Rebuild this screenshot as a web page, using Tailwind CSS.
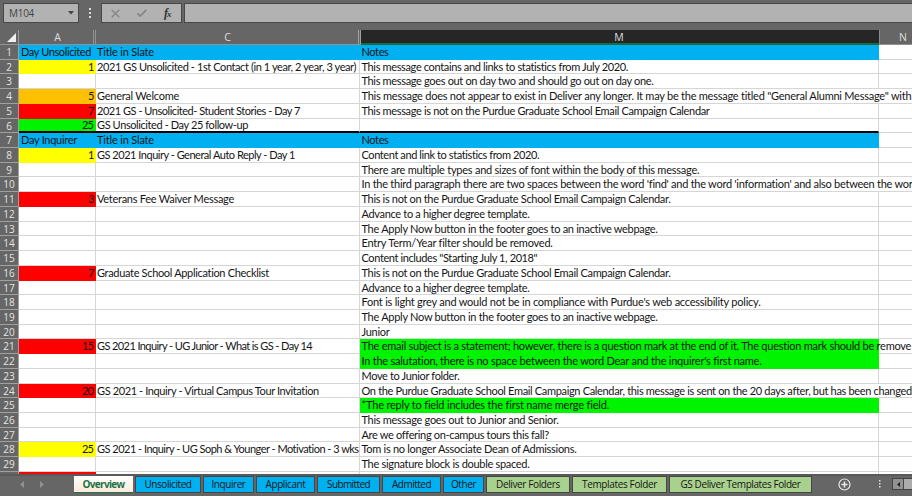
<!DOCTYPE html>
<html lang="en">
<head>
<meta charset="utf-8">
<title>Email campaign overview</title>
<script src="https://cdn.jsdelivr.net/npm/@tailwindcss/browser@4"></script>
</head>
<body class="w-[912px] h-[496px] overflow-hidden bg-[#666666] font-['Lato','Open_Sans',sans-serif] text-[11px] text-[#151515]">
<div class="flex flex-col h-[496px] w-[912px] overflow-hidden">
  <!-- formula bar -->
  <div class="h-[30px] shrink-0 flex items-start pt-[3px] pl-[3px]">
    <div class="w-[76px] h-5 border border-[#484848] bg-[#b2b2b2] flex items-center justify-between pl-[5px] pr-1 text-[#444] font-['Open_Sans',sans-serif] text-[10px]"><span data-w="25">M104</span>
      <svg width="6" height="4" viewBox="0 0 6 4"><path d="M0 0h6L3 3.6z" fill="#444"/></svg></div>
    <svg class="ml-[9px] mt-[5px]" width="4" height="10" viewBox="0 0 4 10" fill="#ddd"><path d="M1 0h2v2H1zM1 4h2v2H1zM1 8h2v2H1z"/></svg>
    <div class="ml-[9px] w-[81px] h-5 border border-[#484848] bg-[#b2b2b2] flex items-center">
      <svg class="ml-[9px]" width="9" height="9" viewBox="0 0 9 9" fill="none" stroke="#858585" stroke-width="1.3"><path d="M.7.7l7.6 7.600M8.300.7L.7 8.300"/></svg>
      <svg class="ml-[17px]" width="10" height="8" viewBox="0 0 10 8" fill="none" stroke="#858585" stroke-width="1.7"><path d="M.6 4.3L3.3 7 9.3.8"/></svg>
      <span class="ml-[17px] font-['Liberation_Serif',serif] italic font-bold text-[12px] leading-3 text-[#333]">f<span class="text-[9px] -ml-px">x</span></span>
    </div>
    <div class="ml-[2px] flex-1 h-5 border border-r-0 border-[#484848] bg-[#b2b2b2]"></div>
  </div>
  <!-- column headings -->
  <div class="h-[15px] shrink-0 flex text-[#dedede] font-['Open_Sans',sans-serif] text-[10.5px] leading-[14px] text-center border-b border-[#929292]">
    <div class="w-[19px] border-r border-[#9a9a9a] flex justify-end items-end pr-[2px] pb-[2px]"><svg width="9" height="9" viewBox="0 0 9 9"><path d="M9 0v9H0z" fill="#f0f0f0"/></svg></div>
    <div class="w-[77px] flex"><div class="flex-1 pl-[3px]">A</div><div class="w-[3px] border-x border-[#929292]"></div></div>
    <div class="w-[265px] flex"><div class="flex-1 pl-[1px]">C</div><div class="w-[3px] border-x border-[#a0a0a0]"></div></div>
    <div class="w-[518px] bg-[#262626] border-b-2 border-[#1c6b3c] h-[15px] leading-[14px] pr-[2px]">M</div>
    <div class="flex-1 border-l border-[#8c8c8c] pl-[14px] text-center">N</div>
  </div>
  <!-- cells -->
  <div id="sheet" class="h-[429px] shrink-0 overflow-hidden bg-white"></div>
  <!-- sheet tabs -->
  <div class="h-[22px] shrink-0 border-t-2 border-[#5a5a5a] bg-[#666666] flex font-['Open_Sans',sans-serif] text-[10px]">
    <div class="w-[74px] shrink-0 flex pt-[5px] pl-5">
      <svg width="24" height="7" viewBox="0 0 24 7" fill="#919191"><path d="M4 0v7L0 3.500zM20 0v7l4-3.500z"/></svg>
    </div>
    <div id="tabs" class="flex shrink-0 h-[17px]"></div>
    <svg class="ml-[24px] mt-[2px]" width="13" height="13" viewBox="0 0 13 13" fill="none" stroke="#e8e8e8"><circle cx="6.500" cy="6.500" r="5.500" stroke-width="1.200"/><path d="M6.500 3.500v6M3.500 6.500h6" stroke-width="1.600"/></svg>
    <svg class="ml-[27px] mt-[4px]" width="4" height="9" viewBox="0 0 4 9" fill="#ddd"><path d="M1 0h1.500v1.500H1zM1 3h1.500v1.500H1zM1 6h1.500v1.500H1z"/></svg>
    <div class="ml-[10px] mt-[2px] w-[12px] h-[12px] border border-[#444] bg-[#929292] flex items-center justify-center"><svg width="3" height="5" viewBox="0 0 3 5"><path d="M3 0v5L0 2.500z" fill="#222"/></svg></div>
    <div class="mt-[2px] flex-1 h-[12px] border-y border-[#444] bg-[#acacac]"></div>
  </div>
</div>
<script>
const Y = 'bg-[#ffff00]', O = 'bg-[#ffc000]', R = 'bg-[#ff0000]', G = 'bg-[#00f400]', B = 'bg-[#00b0f0]';
// [A text, A fill, C text, C width, M text, M width, M fill]
const rows = [
 ['Day Unsolicited', B, 'Title in Slate', 57, 'Notes', 27, B],
 ['1', Y, '2021 GS Unsolicited - 1st Contact (in 1 year, 2 year, 3 year)', 259, 'This message contains and links to statistics from July 2020.', 267],
 ['', '', '', 0, 'This message goes out on day two and should go out on day one.', 292],
 ['5', O, 'General Welcome', 82, 'This message does not appear to exist in Deliver any longer. It may be the message titled "General Alumni Message" with', 550],
 ['7', R, '2021 GS - Unsolicited- Student Stories - Day 7', 203, 'This message is not on the Purdue Graduate School Email Campaign Calendar', 348],
 ['25', G, 'GS Unsolicited - Day 25 follow-up', 151, '', 0],
 ['Day Inquirer', B, 'Title in Slate', 57, 'Notes', 27, B],
 ['1', Y, 'GS 2021 Inquiry - General Auto Reply - Day 1', 198, 'Content and link to statistics from 2020.', 178],
 ['', '', '', 0, 'There are multiple types and sizes of font within the body of this message.', 338],
 ['', '', '', 0, "In the third paragraph there are two spaces between the word 'find' and the word 'information' and also between the wor", 551],
 ['3', R, 'Veterans Fee Waiver Message', 137, 'This is not on the Purdue Graduate School Email Campaign Calendar.', 309],
 ['', '', '', 0, 'Advance to a higher degree template.', 168],
 ['', '', '', 0, 'The Apply Now button in the footer goes to an inactive webpage.', 296],
 ['', '', '', 0, 'Entry Term/Year filter should be removed.', 191],
 ['', '', '', 0, 'Content includes "Starting July 1, 2018"', 176],
 ['7', R, 'Graduate School Application Checklist', 172, 'This is not on the Purdue Graduate School Email Campaign Calendar.', 309],
 ['', '', '', 0, 'Advance to a higher degree template.', 168],
 ['', '', '', 0, "Font is light grey and would not be in compliance with Purdue's web accessibility policy.", 399],
 ['', '', '', 0, 'The Apply Now button in the footer goes to an inactive webpage.', 296],
 ['', '', '', 0, 'Junior', 28],
 ['15', R, 'GS 2021 Inquiry - UG Junior - What is GS - Day 14', 215, 'The email subject is a statement; however, there is a question mark at the end of it. The question mark should be remove', 550, G],
 ['', '', '', 0, "In the salutation, there is no space between the word Dear and the inquirer's first name.", 400, G],
 ['', '', '', 0, 'Move to Junior folder.', 98],
 ['20', R, 'GS 2021 - Inquiry - Virtual Campus Tour Invitation', 222, 'On the Purdue Graduate School Email Campaign Calendar, this message is sent on the 20 days after, but has been changed', 550],
 ['', '', '', 0, '*The reply to field includes the first name merge field.', 247, G],
 ['', '', '', 0, 'This message goes out to Junior and Senior.', 197],
 ['', '', '', 0, 'Are we offering on-campus tours this fall?', 187],
 ['25', Y, 'GS 2021 - Inquiry - UG Soph & Younger - Motivation - 3 wks', 262, 'Tom is no longer Associate Dean of Admissions.', 215],
 ['', '', '', 0, 'The signature block is double spaced.', 168],
 ['', R, '', 0, '', 0]
];
const txt = (t, w) => t ? `<span class="inline-block whitespace-nowrap" data-w="${w}">${t.replace('&', '&amp;')}</span>` : '';
document.getElementById('sheet').innerHTML = rows.map((r, i) => {
  const head = r[1] === B;
  const line = i === 5 ? 'border-b-2 border-b-black border-r border-r-[#d6d6d6]' : 'border-b border-r border-[#d6d6d6]';
  const edge = f => f ? f + (i === 5 ? ' border-b-2 border-black' : '') : line;
  const spill = r[5] > 516 ? 'border-b border-[#d6d6d6]' : line;
  return `<div class="flex h-[14.72px] ${i === 5 ? 'leading-[12px]' : i < 2 ? 'leading-[14px]' : 'leading-[14.5px]'} w-[912px]">
   <div class="w-[19px] shrink-0 bg-[#666666] border-b border-r border-[#a0a0a0] text-[#e4e4e4] text-center leading-[14px] font-['Open_Sans',sans-serif] text-[10px]">${i < 29 ? i + 1 : ''}</div>
   <div class="w-[77px] shrink-0 pr-[3px] ${head ? 'pl-[2px]' : 'text-right'} ${edge(r[1])}">${head ? txt(r[0], i ? 56 : 70) : txt(r[0], r[0].length > 1 ? 11 : 5)}</div>
   <div class="w-[264px] shrink-0 pl-px ${head ? B : line}">${txt(r[2], r[3])}</div>
   <div class="w-[519px] shrink-0 pl-[1.5px] ${r[6] ? r[6] : spill}">${txt(r[4], r[5])}</div>
   <div class="flex-1 border-b border-[#d6d6d6]"></div></div>`;
}).join('');
const blue = 'bg-[#00b0f0] border-[#464646]', green = 'bg-[#a9d18e] border-[#464646]';
// [label, tab pitch, label width, fill]
const tabs = [['Unsolicited', 68, 47, blue], ['Inquirer', 53, 34, blue], ['Applicant', 61, 40, blue], ['Submitted', 65, 43, blue], ['Admitted', 61, 39, blue], ['Other', 43, 25, blue], ['Deliver Folders', 86, 64, green], ['Templates Folder', 97, 75, green], ['GS Deliver Templates Folder', 145, 120, green]];
document.getElementById('tabs').innerHTML =
  `<div class="w-[59px] h-[17px] mr-[2px] bg-gradient-to-b from-white to-[#fdeadb] border-b border-[#217346] text-center leading-[16px] font-bold text-[#217346]">${txt('Overview', 42)}</div>` +
  tabs.map(t => `<div class="h-[17px] shrink-0 border leading-[15px] text-center mr-[2px] whitespace-nowrap ${t[3]}" style="width:${t[1] - 2}px">${txt(t[0], t[2])}</div>`).join('');
function fit() {
  const all = [...document.querySelectorAll('[data-w]')];
  all.forEach(s => { s.style.letterSpacing = '0px'; });
  const widths = all.map(s => s.getBoundingClientRect().width);
  all.forEach((s, i) => { s.style.letterSpacing = (s.dataset.w - widths[i]) / s.textContent.length + 'px'; });
}
fit();
addEventListener('load', () => { fit(); document.fonts.ready.then(fit); requestAnimationFrame(fit); });
</script>
</body>
</html>
